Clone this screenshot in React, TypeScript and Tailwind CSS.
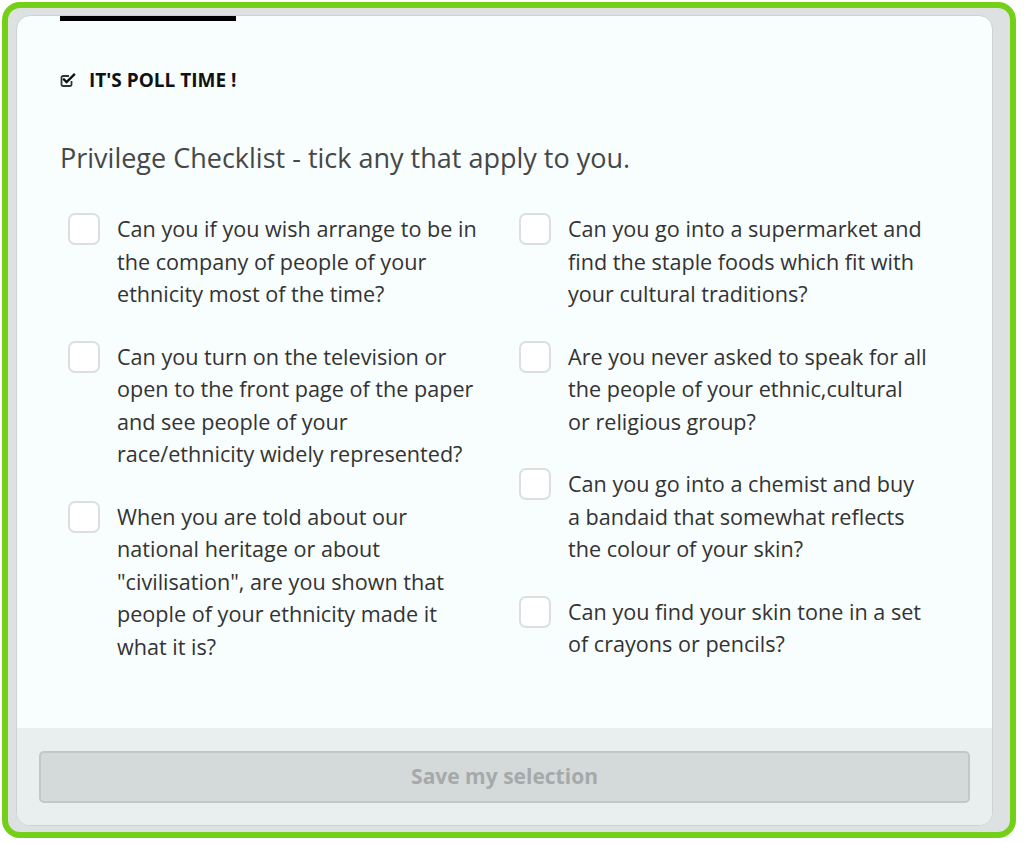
const left = [
  "Can you if you wish arrange to be in the company of people of your ethnicity most of the time?",
  "Can you turn on the television or open to the front page of the paper and see people of your race/ethnicity widely represented?",
  'When you are told about our national heritage or about "civilisation", are you shown that people of your ethnicity made it what it is?',
];

const right = [
  "Can you go into a supermarket and find the staple foods which fit with your cultural traditions?",
  "Are you never asked to speak for all the people of your ethnic,cultural or religious group?",
  "Can you go into a chemist and buy a bandaid that somewhat reflects the colour of your skin?",
  "Can you find your skin tone in a set of crayons or pencils?",
];

function PollIcon() {
  return (
    <svg viewBox="0 0 16 16" className="h-[16px] w-[16px]" fill="none">
      <path
        d="M11.5 9v3.5a1.5 1.5 0 0 1-1.5 1.5H3a1.5 1.5 0 0 1-1.5-1.5V5.5A1.5 1.5 0 0 1 3 4h6"
        stroke="#333"
        strokeWidth="1.8"
      />
      <path d="M4 7.5l2.6 2.6L14 2.8" stroke="#111" strokeWidth="2.4" strokeLinecap="square" />
    </svg>
  );
}

function Item({ text }: { text: string }) {
  return (
    <label className="flex items-start cursor-pointer">
      <span className="ml-2 h-8 w-8 shrink-0 rounded-[7px] border-2 border-[#dcdfe0] bg-white" />
      <span className="ml-[17px] w-[360px] text-[21.6px] leading-[32.5px] text-[#333]">{text}</span>
    </label>
  );
}

export default function App() {
  return (
    <div className="h-[843px] w-[1024px] bg-white p-[2px]" style={{ fontFamily: '"Open Sans", sans-serif' }}>
      <div className="flex h-[836px] w-[1014px] flex-col rounded-[18px] border-[6px] border-[#74cf17] bg-[#dde1e1] pb-[6px] pl-2 pr-[17px] pt-[7px]">
        <div className="flex flex-1 flex-col overflow-hidden rounded-[14px] border border-[#cdd2d2] bg-[#f8fdfd]">
          <div className="flex-1 pl-[43px]">
            <div className="h-[5px] w-[176px] bg-black" />
            <div className="mt-[47px] flex items-center gap-[13px] text-[19px] font-bold leading-6 text-[#111]">
              <PollIcon />
              <span>IT'S POLL TIME !</span>
            </div>
            <h2 className="mt-[50px] text-[27px] leading-8 text-[#474747]">
              Privilege Checklist - tick any that apply to you.
            </h2>
            <div className="mt-[39px] grid grid-cols-[451px_451px]">
              <div className="flex flex-col gap-[30px]">
                {left.map((t) => (
                  <Item key={t} text={t} />
                ))}
              </div>
              <div className="flex flex-col gap-[30px]">
                {right.map((t) => (
                  <Item key={t} text={t} />
                ))}
              </div>
            </div>
          </div>
          <div className="h-[97px] bg-[#e9eeee] px-[22px] pt-[23px]">
            <button
              disabled
              className="h-[52px] w-full rounded-[5px] border-2 border-[#c2c7c7] bg-[#d4d9d9] text-[21px] font-bold text-[#a6a9a9]"
            >
              Save my selection
            </button>
          </div>
        </div>
      </div>
    </div>
  );
}
